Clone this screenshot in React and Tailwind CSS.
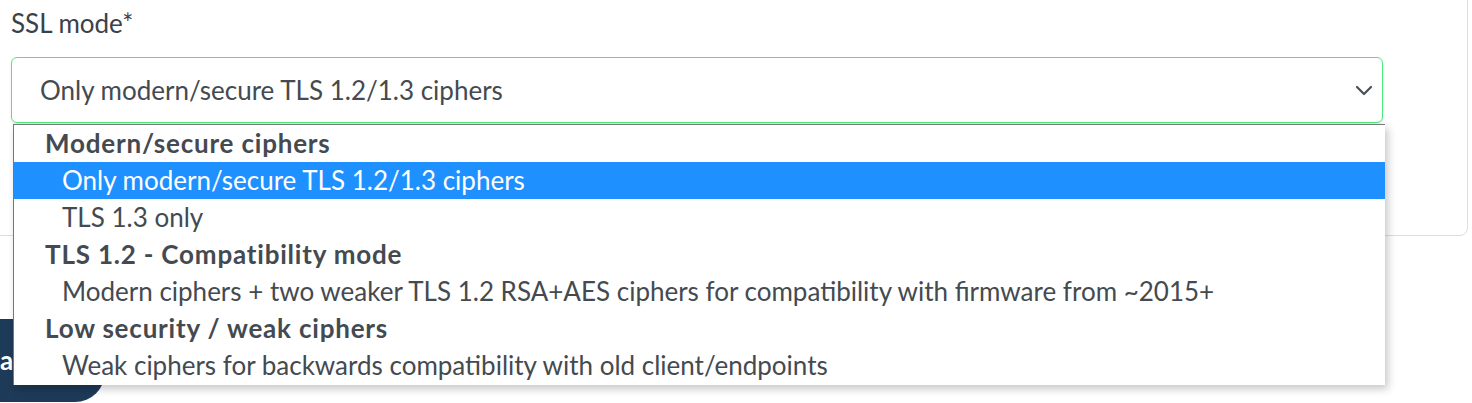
import React from 'react';

const groups = [
  {
    label: 'Modern/secure ciphers',
    options: ['Only modern/secure TLS 1.2/1.3 ciphers', 'TLS 1.3 only'],
  },
  {
    label: 'TLS 1.2 - Compatibility mode',
    options: ['Modern ciphers + two weaker TLS 1.2 RSA+AES ciphers for compatibility with firmware from ~2015+'],
  },
  {
    label: 'Low security / weak ciphers',
    options: ['Weak ciphers for backwards compatibility with old client/endpoints'],
  },
];

const selected = 'Only modern/secure TLS 1.2/1.3 ciphers';

const App = () => {
  return (
    <div className="w-[1472px] h-[403px] overflow-hidden bg-white text-[#444a50]" style={{ fontFamily: 'Lato, "Noto Sans", sans-serif' }}>
      <div className="-ml-[20px] -mt-[20px] w-[1488px] rounded-lg border border-[#dedede] bg-white pl-[30px] pr-[84px] pt-[26px] pb-[112px]">
        <label className="block text-[26px] leading-[32px] text-[#3b4148]">SSL mode*</label>
        <div className="relative mt-[18px]">
          <div className="flex h-[66px] items-center justify-between rounded-md border border-[#4be87c] bg-white pl-[28px] pr-[7px] text-[26px] shadow-[0_2px_3px_rgba(0,0,0,0.08)]">
            <span>{selected}</span>
            <svg width="18" height="18" viewBox="0 0 18 18" fill="none" stroke="#4a5057" strokeWidth="2.2" strokeLinecap="round" strokeLinejoin="round" className="mr-[2px]">
              <path d="M2 6l7 7 7-7" />
            </svg>
          </div>
          <div className="absolute left-[2px] top-[67px] z-10 w-[1372px] border-t border-l border-[#777] bg-white pb-[1px] shadow-[3px_4px_8px_rgba(0,0,0,0.22)]">
            {groups.map((g) => (
              <div key={g.label}>
                <div className="flex h-[37px] items-center pl-[31px] text-[26px] font-bold tracking-[0.8px] text-[#444a50]">{g.label}</div>
                {g.options.map((o) => (
                  <div
                    key={o}
                    className={
                      o === selected
                        ? 'flex h-[37px] items-center bg-[#1e90ff] pl-[48px] text-[26px] text-white'
                        : 'flex h-[37px] items-center pl-[48px] text-[26px] text-[#444a50]'
                    }
                  >
                    {o}
                  </div>
                ))}
              </div>
            ))}
          </div>
        </div>
      </div>
      <button className="mt-[83px] -ml-[50px] flex h-[83px] w-[155px] items-center rounded-[30px] bg-[#1d3a58] pl-[36px] text-[26px] font-bold text-white">
        Save
      </button>
    </div>
  );
};

export default App;
